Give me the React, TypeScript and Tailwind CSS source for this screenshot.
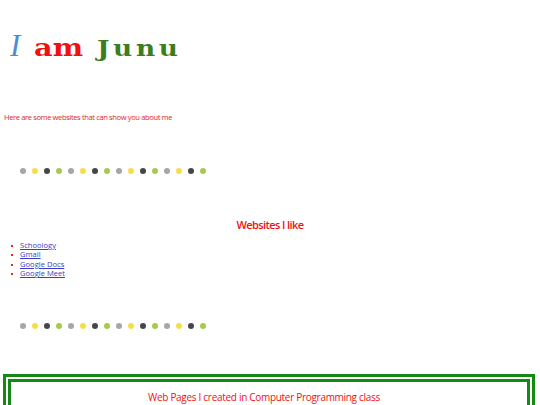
import type React from 'react';

const DOT_COLOURS = ['bg-[#a6a6a6]', 'bg-[#f2df4a]', 'bg-[#464646]', 'bg-[#a9c94c]'] as const;

const DOT_KEYS: readonly string[] = Array.from({ length: 16 }, (_v, dotOrdinal) => `dot-${dotOrdinal}`);

const WEBSITES: ReadonlyArray<{ readonly id: string; readonly label: string }> = [
  { id: 'schoology', label: 'Schoology' },
  { id: 'gmail', label: 'Gmail' },
  { id: 'docs', label: 'Google Docs' },
  { id: 'meet', label: 'Google Meet' },
];

function DotRow(): React.JSX.Element {
  return (
    <div className="flex items-center gap-[6px] pl-[20px]">
      {DOT_KEYS.map((dotKey, dotOrdinal) => (
        <span key={dotKey} className={`block h-[6px] w-[6px] rounded-full ${DOT_COLOURS[dotOrdinal % 4]}`} />
      ))}
    </div>
  );
}

export default function App(): React.JSX.Element {
  return (
    <div className="h-[405px] w-[540px] overflow-hidden bg-white font-['Open_Sans','Noto_Sans',sans-serif]">
      <h1 className="flex items-baseline pl-[10px] pt-[26px] leading-[40px]">
        <span className="font-['Liberation_Serif',serif] text-[31px] italic text-[#4a8fd4]">I</span>
        <span className="ml-[14px] inline-block origin-left scale-x-[1.15] font-['DejaVu_Serif',serif] text-[25px] font-bold text-[#f01010]">
          am
        </span>
        <span className="ml-[20px] inline-block origin-left scale-x-[1.2] font-['DejaVu_Serif',serif] text-[22px] font-bold tracking-[3px] text-[#3d7d22]">
          Junu
        </span>
      </h1>

      <p className="mt-[43px] pl-[4px] text-[7.6px] font-medium leading-[12px] tracking-[-0.4px] text-[#e02828]">
        Here are some websites that can show you about me
      </p>

      <div className="mt-[45px]">
        <DotRow />
      </div>

      <h2 className="mt-[43px] text-center text-[11px] font-semibold leading-[16px] tracking-[-0.6px] text-[#f01010]">
        Websites I like
      </h2>

      <ul className="mt-[8px] text-[7.6px] leading-[9.4px]">
        {WEBSITES.map((site) => (
          <li key={site.id} className="flex items-center">
            <span className="ml-[11px] mr-[7px] block h-[2px] w-[2px] bg-[#e02828]" />
            <a href="#" className="text-[#3b3bc8] underline">
              {site.label}
            </a>
          </li>
        ))}
      </ul>

      <div className="mt-[44px]">
        <DotRow />
      </div>

      <div className="ml-[3px] mr-[5px] mt-[45px] h-[60px] border-[8px] border-double border-[#138a13] pr-[10px] pt-[7px]">
        <h2 className="text-center text-[10px] font-medium leading-[16px] tracking-[-0.3px] text-[#f01010]">
          Web Pages I created in Computer Programming class
        </h2>
      </div>
    </div>
  );
}
